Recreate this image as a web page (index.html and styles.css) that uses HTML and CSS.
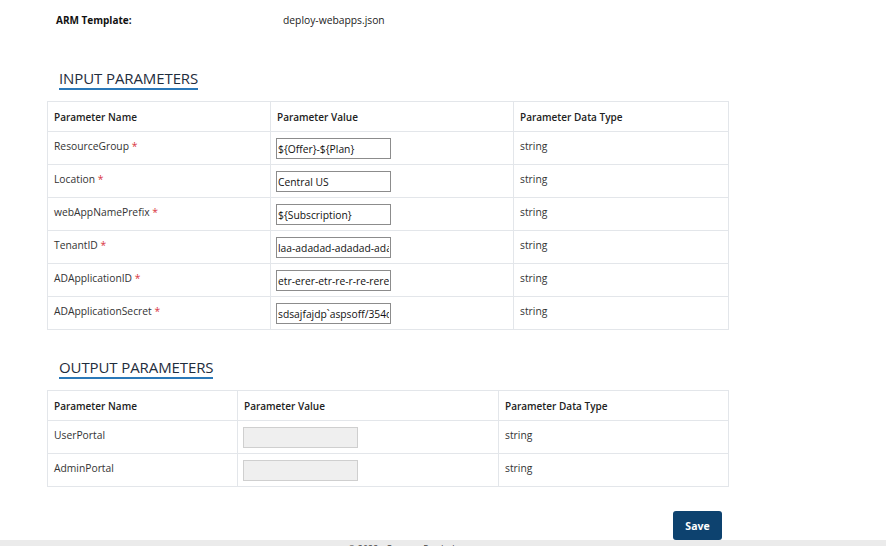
FILE: index.html
```html
<!DOCTYPE html>
<html lang="en">
<head>
<meta charset="utf-8">
<title>Deployment parameters</title>
<link rel="stylesheet" href="styles.css">
</head>
<body>
<div class="page">
  <div class="arm">
    <span class="arm-label">ARM Template:</span>
    <span class="arm-value">deploy-webapps.json</span>
  </div>

  <h2 class="section-title input-title">INPUT PARAMETERS</h2>
  <table class="params params-in">
    <colgroup><col class="c1"><col class="c2"><col class="c3"></colgroup>
    <thead>
      <tr><th>Parameter Name</th><th>Parameter Value</th><th>Parameter Data Type</th></tr>
    </thead>
    <tbody>
      <tr><td>ResourceGroup <span class="req">*</span></td><td><input class="field" type="text" value="${Offer}-${Plan}"></td><td>string</td></tr>
      <tr><td>Location <span class="req">*</span></td><td><input class="field" type="text" value="Central US"></td><td>string</td></tr>
      <tr><td>webAppNamePrefix <span class="req">*</span></td><td><input class="field" type="text" value="${Subscription}"></td><td>string</td></tr>
      <tr><td>TenantID <span class="req">*</span></td><td><input class="field" type="text" value="laa-adadad-adadad-adadad"></td><td>string</td></tr>
      <tr><td>ADApplicationID <span class="req">*</span></td><td><input class="field" type="text" value="etr-erer-etr-re-r-re-rere"></td><td>string</td></tr>
      <tr><td>ADApplicationSecret <span class="req">*</span></td><td><input class="field" type="text" value="sdsajfajdp`aspsoff/354dfs"></td><td>string</td></tr>
    </tbody>
  </table>

  <h2 class="section-title output-title">OUTPUT PARAMETERS</h2>
  <table class="params params-out">
    <colgroup><col class="o1"><col class="o2"><col class="o3"></colgroup>
    <thead>
      <tr><th>Parameter Name</th><th>Parameter Value</th><th>Parameter Data Type</th></tr>
    </thead>
    <tbody>
      <tr><td>UserPortal</td><td><input class="field field-ro" type="text" readonly></td><td>string</td></tr>
      <tr><td>AdminPortal</td><td><input class="field field-ro" type="text" readonly></td><td>string</td></tr>
    </tbody>
  </table>

  <div class="actions">
    <button class="save" type="button">Save</button>
  </div>
</div>
<footer class="footer">© 2022 - Contoso Pvt. Ltd.</footer>
</body>
</html>
```

FILE: styles.css
```css
html, body {
  margin: 0;
  padding: 0;
  overflow: hidden;
  background: #ffffff;
}

body {
  font-family: "Open Sans", "Noto Sans", "DejaVu Sans", sans-serif;
  font-size: 10.3px;
  color: #333333;
}

.page {
  padding-top: 12px;
}

.arm {
  display: flex;
  padding-left: 56px;
  line-height: 16px;
}

.arm-label {
  width: 227px;
  font-weight: 700;
  color: #111111;
  font-size: 10px;
}

.arm-value {
  color: #222222;
}

.section-title {
  display: inline-block;
  margin: 0 0 0 59px;
  font-size: 15px;
  font-weight: 400;
  line-height: 20px;
  color: #1f2d3d;
  border-bottom: 2px solid #2a78b8;
  padding-bottom: 0;
  letter-spacing: -0.1px;
}

.input-title {
  margin-top: 40px;
}

.output-title {
  margin-top: 27px;
}

.params {
  margin: 11px 0 0 47px;
  width: 681px;
  border-collapse: collapse;
  table-layout: fixed;
  border: 1px solid #e3e6ea;
}

.params th,
.params td {
  border: 1px solid #e3e6ea;
  text-align: left;
  vertical-align: top;
  padding: 0 6px;
}

.params th {
  height: 29px;
  vertical-align: middle;
  font-weight: 600;
  font-size: 10px;
  color: #222222;
}

.params td {
  height: 33px;
  padding-top: 6px;
  padding-bottom: 0;
  box-sizing: border-box;
  line-height: 16px;
}

.params td:nth-child(2) {
  padding-left: 5px;
}

.c1 { width: 223px; }
.c2 { width: 243px; }
.c3 { width: 215px; }

.o1 { width: 190px; }
.o2 { width: 261px; }
.o3 { width: 230px; }

.req {
  color: #d9363e;
}

.field {
  display: block;
  box-sizing: border-box;
  width: 115px;
  height: 21px;
  margin: 0;
  padding: 0 1px;
  border: 1px solid #8c8c8c;
  border-radius: 0;
  font-family: "Open Sans", "Noto Sans", sans-serif;
  font-size: 10.3px;
  color: #111111;
  background: #ffffff;
  outline: none;
}

.field-ro {
  border: 1px solid #cfcfcf;
  background: #efefef;
}

.params-out td {
  height: 33px;
}

.actions {
  display: flex;
  justify-content: flex-end;
  width: 722px;
  margin-top: 24px;
}

.save {
  width: 49px;
  height: 29px;
  border: 0;
  border-radius: 3px;
  background: #0d426f;
  color: #ffffff;
  font-family: "Open Sans", "Noto Sans", sans-serif;
  font-size: 10.5px;
  font-weight: 700;
  padding: 0;
}

.footer {
  margin-top: 0;
  height: 30px;
  background: #ebebeb;
  padding: 2px 0 0 348px;
  font-size: 9px;
  color: #444444;
}
```
